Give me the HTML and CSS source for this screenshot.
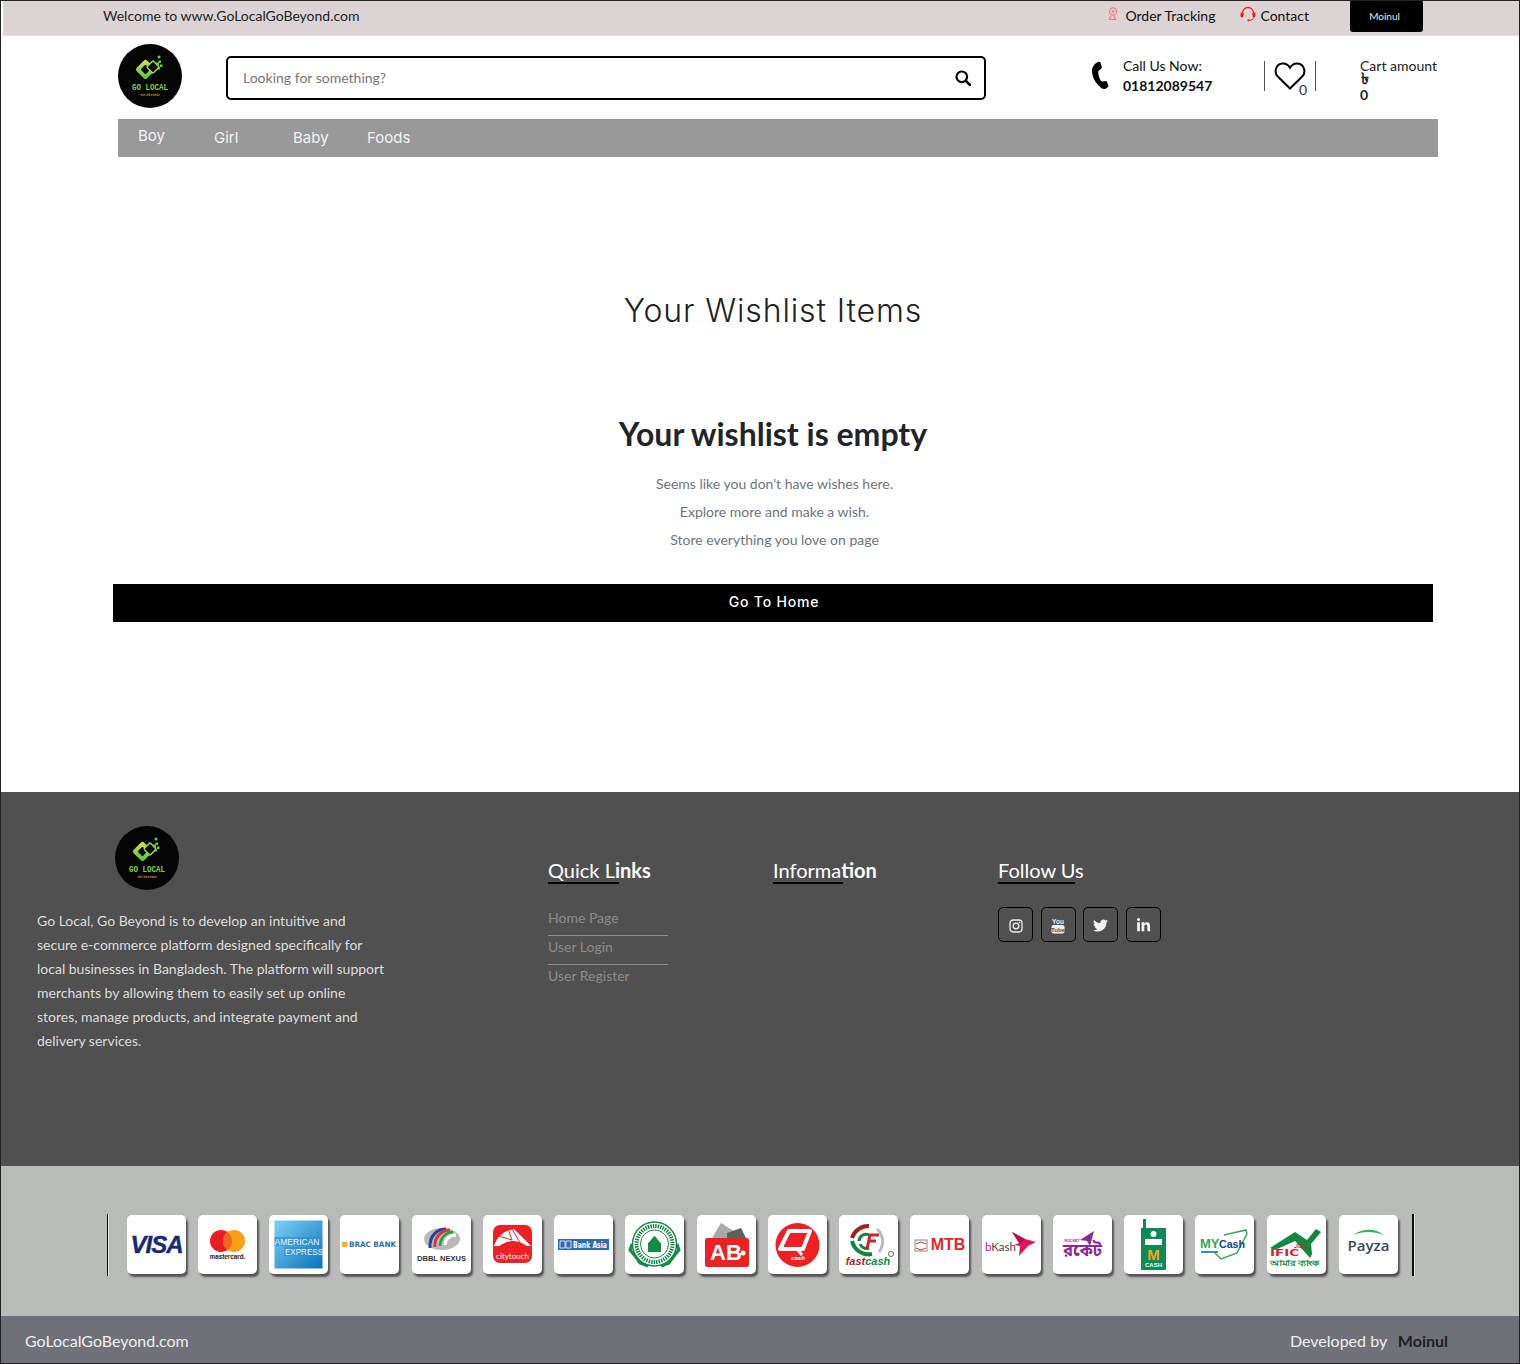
FILE: index.html
```html
<!DOCTYPE html>
<html lang="en">
<head>
<meta charset="utf-8">
<title>Go Local Go Beyond - Wishlist</title>
<link rel="stylesheet" href="styles.css">
</head>
<body>
<svg class="defs" width="0" height="0" aria-hidden="true">
  <defs>
    <linearGradient id="lg" x1="0" y1="0" x2="1" y2="1"><stop offset="0" stop-color="#d8e04a"/><stop offset="1" stop-color="#4fc04a"/></linearGradient>
    <symbol id="logo" viewBox="0 0 64 64">
      <circle cx="32" cy="32" r="32" fill="#050505"/>
      <rect x="20" y="18" width="15" height="15" rx="2.500" transform="rotate(45 27.500 25.500)" fill="url(#lg)"/>
      <rect x="24" y="22" width="7" height="7" rx="1" transform="rotate(45 27.500 25.500)" fill="#050505"/>
      <rect x="30.500" y="18.500" width="9" height="9" rx="1.500" transform="rotate(45 35 23)" fill="#050505" stroke="#a6d846" stroke-width="1.500"/>
      <rect x="38" y="18.500" width="3" height="3" fill="#6ecb47"/><rect x="42" y="20.500" width="2.500" height="2.500" fill="#6ecb47"/><rect x="40.500" y="16.500" width="2.500" height="2.500" fill="#6ecb47"/><rect x="39.500" y="23" width="2.500" height="2.500" fill="#6ecb47"/>
      <circle cx="41" cy="13" r="1.500" fill="#6ecb47"/>
      <text x="32" y="46" class="logo-t1" textLength="36" lengthAdjust="spacingAndGlyphs">GO LOCAL</text>
      <text x="32" y="51.500" class="logo-t2" textLength="19" lengthAdjust="spacingAndGlyphs">GO BEYOND</text>
    </symbol>
  </defs>
</svg>
<div class="page">
  <div class="topbar">
    <span class="welcome">Welcome to www.GoLocalGoBeyond.com</span>
    <div class="top-right">
      <a class="top-link track"><svg class="pin" viewBox="0 0 10 14"><circle cx="5" cy="4.500" r="3.600" fill="none" stroke="#f08080" stroke-width="1.200"/><circle cx="5" cy="4.500" r="1.400" fill="#f08080"/><path d="M3 8.500l-1.500 4h6l-1.500-4" fill="none" stroke="#f08080" stroke-width="1.200"/></svg>Order Tracking</a>
      <a class="top-link contact"><svg class="headset" viewBox="0 0 16 16"><path d="M2.500 9V7a5.500 5.500 0 0 1 11 0v2" fill="none" stroke="#f01818" stroke-width="1.300"/><rect x="0.500" y="6.500" width="3" height="5" rx="1.400" fill="#f01818"/><rect x="12.500" y="6.500" width="3" height="5" rx="1.400" fill="#f01818"/><path d="M13.500 11.500c0 2-2 2.800-4 2.800" fill="none" stroke="#f01818"/><circle cx="8.500" cy="14.300" r="1.100" fill="#f01818"/></svg>Contact</a>
      <button class="user-btn">Moinul</button>
    </div>
  </div>

  <header class="site-header">
    <svg class="logo"><use href="#logo"/></svg>
    <div class="search">
      <span class="search-ph">Looking for something?</span>
      <svg class="search-ic" viewBox="0 0 16 16"><circle cx="6.800" cy="6.800" r="5.300" fill="none" stroke="#000" stroke-width="2.200"/><path d="M10.700 10.700l4.300 4.300" stroke="#000" stroke-width="2.600" stroke-linecap="round"/></svg>
    </div>
    <div class="call">
      <svg class="phone" viewBox="0 0 18 30"><path d="M6 1.500c1-.8 3-.9 3.600 0l1.200 4.800c.2 1-.6 1.700-2.600 3-.9.600-1 1.300-.9 2.700.2 2.500 1 5.200 2.400 7.500.7 1 1.200 1.300 2.200 1 2-.6 3-.9 3.700-.2l1.900 4.300c.2 1.100-1.300 2.600-2.900 3.200-2.200.8-4.500-.2-6.300-2.800C4 21.700 1.300 15.500 1 10.500.8 6.600 3 3.300 6 1.500z" fill="#000"/></svg>
      <div class="call-text"><span>Call Us Now:</span><strong>01812089547</strong></div>
    </div>
    <div class="wish">
      <svg class="heart" viewBox="0 0 32 28"><path d="M16 26.500L3.800 14.500C-.5 10 2 2 8.500 1.600c3.200-.2 5.800 1.300 7.500 4.200 1.700-2.900 4.300-4.400 7.500-4.200C30 2 32.500 10 28.200 14.500z" fill="#fff" stroke="#000" stroke-width="2"/></svg>
      <span class="wish-count">0</span>
    </div>
    <div class="cart">
      <span class="cart-label">Cart amount</span>
      <span class="cart-sym">৳</span>
      <span class="cart-val">0</span>
    </div>
  </header>

  <nav class="main-nav">
    <a class="nav-boy">Boy</a>
    <a class="nav-girl">Girl</a>
    <a class="nav-baby">Baby</a>
    <a>Foods</a>
  </nav>

  <main class="wishlist">
    <h1>Your Wishlist Items</h1>
    <h2>Your wishlist is empty</h2>
    <p>Seems like you don't have wishes here.</p>
    <p>Explore more and make a wish.</p>
    <p>Store everything you love on page</p>
    <a class="home-btn">Go To Home</a>
  </main>

  <footer class="site-footer">
    <div class="about">
      <svg class="logo foot-logo"><use href="#logo"/></svg>
      <p>Go Local, Go Beyond is to develop an intuitive and secure e-commerce platform designed specifically for local businesses in Bangladesh. The platform will support merchants by allowing them to easily set up online stores, manage products, and integrate payment and delivery services.</p>
    </div>
    <div class="foot-col">
      <h3>Quick L<b>inks</b></h3>
      <ul class="foot-links">
        <li>Home Page</li>
        <li>User Login</li>
        <li>User Register</li>
      </ul>
    </div>
    <div class="foot-col">
      <h3 class="h-info">Informa<b>tion</b></h3>
    </div>
    <div class="foot-col">
      <h3 class="h-follow">Follow Us</h3>
      <div class="socials">
        <a class="social"><svg viewBox="0 0 14 14" class="ic-s"><rect x="1" y="1" width="12" height="12" rx="3.200" fill="none" stroke="#eee" stroke-width="1.300"/><circle cx="7" cy="7" r="2.800" fill="none" stroke="#eee" stroke-width="1.300"/><circle cx="10.500" cy="3.500" r=".8" fill="#eee"/></svg></a>
        <a class="social"><svg viewBox="0 0 14 16" class="ic-y"><text x="7" y="6" class="yt-you">You</text><rect x="0.500" y="7" width="13" height="8.500" rx="2" fill="#eee"/><text x="7" y="13.500" class="yt-tube">Tube</text></svg></a>
        <a class="social"><svg viewBox="0 0 512 512" class="ic-t"><path fill="#f4f4f4" d="M459.37 151.716c.325 4.548.325 9.097.325 13.645 0 138.72-105.583 298.558-298.558 298.558-59.452 0-114.68-17.219-161.137-47.106 8.447.974 16.568 1.299 25.34 1.299 49.055 0 94.213-16.568 130.274-44.832-46.132-.975-84.792-31.188-98.112-72.772 6.498.974 12.995 1.624 19.818 1.624 9.421 0 18.843-1.3 27.614-3.573-48.081-9.747-84.143-51.98-84.143-102.985v-1.299c13.969 7.797 30.214 12.67 47.431 13.319-28.264-18.843-46.781-51.005-46.781-87.391 0-19.492 5.197-37.36 14.294-52.954 51.655 63.675 129.3 105.258 216.365 109.807-1.624-7.797-2.599-15.918-2.599-24.04 0-57.828 46.782-104.934 104.934-104.934 30.213 0 57.502 12.67 76.67 33.137 23.715-4.548 46.456-13.32 66.599-25.34-7.798 24.366-24.366 44.833-46.132 57.827 21.117-2.273 41.584-8.122 60.426-16.243-14.292 20.791-32.161 39.308-52.628 54.253z"/></svg></a>
        <a class="social"><svg viewBox="0 0 448 512" class="ic-t"><path fill="#f4f4f4" d="M100.280 448H7.400V148.900h92.880zM53.790 108.100C24.090 108.100 0 83.500 0 53.800a53.790 53.790 0 0 1 107.580 0c0 29.700-24.100 54.300-53.790 54.300zM447.900 448h-92.680V302.400c0-34.700-.7-79.200-48.290-79.200-48.290 0-55.690 37.700-55.690 76.700V448h-92.780V148.900h89.080v40.800h1.300c12.400-23.500 42.690-48.300 87.880-48.300 94 0 111.280 61.900 111.280 142.300V448z"/></svg></a>
      </div>
    </div>
  </footer>

  <section class="payments">
    <div class="pay-row">
      <div class="pay"><svg viewBox="0 0 59 59"><text x="29.500" y="38" class="p-visa">VISA</text></svg></div>
      <div class="pay"><svg viewBox="0 0 59 59"><circle cx="23" cy="26" r="11" fill="#eb1c24"/><circle cx="36" cy="26" r="11" fill="#f9a01b"/><path d="M29.500 17a11 11 0 0 1 0 18 11 11 0 0 1 0-18z" fill="#f26522"/><text x="29.500" y="44" class="p-mc">mastercard.</text></svg></div>
      <div class="pay"><svg viewBox="0 0 59 59"><defs><linearGradient id="amex" x1="0" y1="0" x2="1" y2="1"><stop offset="0" stop-color="#7fd0f4"/><stop offset="1" stop-color="#0b72bb"/></linearGradient></defs><rect x="5.500" y="5.500" width="48" height="48" fill="url(#amex)"/><rect x="5.500" y="22" width="45" height="9" fill="#2b8ccb" opacity=".6"/><rect x="15" y="32" width="38" height="9" fill="#2b8ccb" opacity=".6"/><text x="28" y="30" class="p-amex" textLength="45" lengthAdjust="spacingAndGlyphs">AMERICAN</text><text x="35" y="40" class="p-amex" textLength="38" lengthAdjust="spacingAndGlyphs">EXPRESS</text></svg></div>
      <div class="pay"><svg viewBox="0 0 59 59"><rect x="2" y="27" width="5.500" height="5" fill="#f5b21a"/><text x="32.500" y="32" class="p-brac" textLength="47" lengthAdjust="spacingAndGlyphs">BRAC BANK</text></svg></div>
      <div class="pay"><svg viewBox="0 0 59 59"><ellipse cx="30" cy="24" rx="18" ry="11" fill="#b9b9b9"/><path d="M18 33c-1-13 8-19 16-19" fill="none" stroke="#2b3f9b" stroke-width="3"/><path d="M23 32c-1-10 7-17 15-17" fill="none" stroke="#d13a35" stroke-width="3"/><path d="M28 31c0-8 6-14 13-14" fill="none" stroke="#1f9c4a" stroke-width="2.500"/><path d="M33 30c0-6 5-10 11-10" fill="none" stroke="#fff" stroke-width="3"/><text x="29.500" y="45.500" class="p-dbbl" textLength="49" lengthAdjust="spacingAndGlyphs">DBBL NEXUS</text></svg></div>
      <div class="pay"><svg viewBox="0 0 59 59"><rect x="10" y="10" width="39" height="38" rx="7" fill="#ed2024"/><path d="M11 31c3-10 10-15 20-17l17 17" fill="#fff"/><path d="M11 36c6-7 14-10 19-10s13 3 18 9" fill="#ed2024"/><path d="M12 20l17 5M24 11l5 14M29 14l10 17" stroke="#ed2024" stroke-width="1" fill="none"/><text x="29.500" y="44" class="p-city">citytouch</text></svg></div>
      <div class="pay"><svg viewBox="0 0 59 59"><rect x="4" y="24" width="51" height="11" fill="#2b6bb5"/><path d="M6 26h5v7H6zM12 26h5v7h-5z" fill="none" stroke="#fff" stroke-width=".8"/><text x="19" y="33" class="p-asia" textLength="34" lengthAdjust="spacingAndGlyphs">Bank Asia</text></svg></div>
      <div class="pay"><svg viewBox="0 0 59 59"><circle cx="29.500" cy="29" r="22" fill="none" stroke="#14894a" stroke-width="1.500"/><circle cx="29.500" cy="29" r="18" fill="none" stroke="#14894a" stroke-width="4" stroke-dasharray="1.500 1"/><circle cx="29.500" cy="29" r="14" fill="#fff" stroke="#14894a"/><path d="M23 37v-9c2-1 3-4 6.500-7 3.500 3 4.500 6 6.500 7v9z" fill="#14894a"/><path d="M7 29l-2 6 5 6 5 7 8 3M52 29l2 6-5 6-5 7-8 3" fill="none" stroke="#14894a" stroke-width="3"/></svg></div>
      <div class="pay"><svg viewBox="0 0 59 59"><path d="M15 23l9-15 16 10 3 5z" fill="#a9a9a9"/><path d="M30 18l14-5 5 10H30z" fill="#606060"/><rect x="8" y="23" width="44" height="29" rx="2.500" fill="#ed2024"/><text x="13" y="45" class="p-ab">AB</text><circle cx="46" cy="38" r="2.500" fill="#fff"/></svg></div>
      <div class="pay"><svg viewBox="0 0 59 59"><circle cx="29.500" cy="30" r="22" fill="#ed2024"/><path d="M21 16h21l-7 18H12z" fill="none" stroke="#fff" stroke-width="4" stroke-linejoin="round"/><path d="M29 34l5 6" stroke="#fff" stroke-width="3"/><text x="30" y="45" class="p-q">cash</text></svg></div>
      <div class="pay"><svg viewBox="0 0 59 59"><path d="M30 11a17 17 0 0 0-17 12" fill="none" stroke="#a51f22" stroke-width="4"/><path d="M13 26a17 17 0 0 0 20 13" fill="none" stroke="#15843f" stroke-width="4"/><path d="M38 14a17 17 0 0 1 2 23" fill="none" stroke="#bbb" stroke-width="3"/><path d="M20 26a7 7 0 0 1 10-6M21 29a7 7 0 0 0 9 4" fill="none" stroke="#15843f" stroke-width="3"/><path d="M28 34l3-14h9M29 26h8" fill="none" stroke="#c8262a" stroke-width="3"/><text x="29" y="50" class="p-fast"><tspan fill="#a51f22">fast</tspan><tspan fill="#15843f">cash</tspan></text><circle cx="52" cy="39" r="2.500" fill="none" stroke="#666"/></svg></div>
      <div class="pay"><svg viewBox="0 0 59 59"><rect x="5" y="25" width="12" height="11" fill="#fff" stroke="#888"/><path d="M6 29l5-2 5 2M6 33l5 2 5-2" fill="none" stroke="#d1322e"/><text x="38" y="35" class="p-mtb">MTB</text></svg></div>
      <div class="pay"><svg viewBox="0 0 59 59"><text x="3" y="36" class="p-bkash"><tspan fill="#d1175f">b</tspan>Kash</text><path d="M30 17l13 7 11 3-8 4-9 10 1-10-6-1 5-2z" fill="#e2125f"/><path d="M30 17l13 7-5 5z" fill="#b30f4f"/></svg></div>
      <div class="pay"><svg viewBox="0 0 59 59"><path d="M27 25l14-9-4 15-3-5z" fill="#8c2a92"/><text x="19" y="27" class="p-rocket">ROCKET</text><text x="29.500" y="41" class="p-rocket-bn" textLength="39" lengthAdjust="spacingAndGlyphs">রকেট</text></svg></div>
      <div class="pay"><svg viewBox="0 0 59 59"><rect x="19" y="4" width="3" height="10" fill="#0e8a56"/><rect x="17" y="13" width="25" height="42" fill="#0e8a56"/><circle cx="29.500" cy="19" r="3" fill="#fff"/><rect x="21" y="24" width="17" height="6" fill="#fff"/><text x="29.500" y="45" class="p-m">M</text><text x="29.500" y="52" class="p-mcash">CASH</text></svg></div>
      <div class="pay"><svg viewBox="0 0 59 59"><path d="M29 20l22-5 1 4-10 19-16 6-6-6" fill="#fff" stroke="#3aa655" stroke-width="1.500"/><text x="5" y="33" class="p-my">MY</text><text x="24" y="33" class="p-cash" textLength="26" lengthAdjust="spacingAndGlyphs">Cash</text><rect x="6" y="36" width="17" height="2" fill="#2b9a9a"/></svg></div>
      <div class="pay"><svg viewBox="0 0 59 59"><path d="M3 33L28 17l12 8 9-11 5 3-10 12 1 10-2 4-15-17-20 9z" fill="#13873f"/><path d="M27 33a8 8 0 0 1 9 1M29 30a12 12 0 0 1 11 2" fill="none" stroke="#d1232a"/><text x="3" y="41" class="p-ific" textLength="29" lengthAdjust="spacingAndGlyphs">IFIC</text><text x="28" y="51" class="p-ific2" textLength="50" lengthAdjust="spacingAndGlyphs">আমার ব্যাংক</text></svg></div>
      <div class="pay"><svg viewBox="0 0 59 59"><path d="M14 20c10-7 22-7 31 0-10-4-21-4-31 0z" fill="#2fb457"/><text x="29.500" y="36" class="p-payza">Payza</text></svg></div>
    </div>
  </section>

  <div class="copyright">
    <span>GoLocalGoBeyond.com</span>
    <span class="dev">Developed by <b>Moinul</b></span>
  </div>
</div>
</body>
</html>
```

FILE: styles.css
```css
* { box-sizing: border-box; }
html, body { margin: 0; padding: 0; }
body { font-family: "Lato", "Noto Sans", sans-serif; color: #212529; background: #fff; }
.defs { position: absolute; }
a { text-decoration: none; color: inherit; }

.page { width: 1520px; height: 1364px; border: 1px solid #222; display: flex; flex-direction: column; overflow: hidden; background: #fff; }

.topbar { margin-left: 2px; height: 35px; padding: 0 96px 0 100px; background: #dcd4d4; border-bottom: 1px solid #e2dede; display: flex; align-items: flex-start; justify-content: space-between; font-size: 14px; flex: none; }
.welcome { line-height: 30px; }
.top-right { display: flex; align-items: flex-start; }
.top-link { display: flex; align-items: center; height: 29px; color: #111; white-space: nowrap; }
.track { margin-right: 25px; }
.contact { margin-right: 41px; }
.pin { width: 10px; height: 14px; margin-right: 7px; margin-top: -3px; }
.headset { width: 16px; height: 16px; margin-right: 4px; margin-top: -3px; }
.user-btn { width: 73px; height: 32px; margin-top: -1px; background: #000; color: #e8e8e8; border: 0; border-radius: 3px; font: 10px "Lato", sans-serif; padding: 0 4px 0 0; }

.site-header { height: 83px; padding: 8px 0 0 117px; display: flex; align-items: flex-start; flex: none; }
.logo { width: 64px; height: 64px; display: block; flex: none; }
.logo-t1 { font: 700 9px "Liberation Mono", monospace; fill: #86d23c; text-anchor: middle; }
.logo-t2 { font: 700 3px "DejaVu Sans", sans-serif; fill: #b8821e; text-anchor: middle; }
.search { width: 760px; height: 44px; margin: 12px 0 0 44px; border: 2px solid #000; border-radius: 5px; display: flex; align-items: center; justify-content: space-between; padding: 0 13px 0 15px; flex: none; }
.search-ph { font-size: 14px; color: #777; margin-top: -1px; }
.search-ic { width: 16px; height: 16px; }
.call { display: flex; margin: 12px 0 0 105px; width: 173px; flex: none; }
.phone { width: 18px; height: 30px; margin: 5px 14px 0 0; flex: none; }
.call-text { display: flex; flex-direction: column; font-size: 14px; line-height: 20px; color: #111; }
.call-text strong { font-size: 14px; font-weight: 700; }
.wish { position: relative; width: 52px; height: 30px; margin-top: 17px; border-left: 1px solid #555; border-right: 1px solid #555; flex: none; }
.heart { position: absolute; left: 9px; top: 1px; width: 32px; height: 28px; }
.wish-count { position: absolute; left: 34px; top: 21px; font-size: 14px; line-height: 16px; color: #333; }
.cart { display: flex; flex-direction: column; margin: 13px 0 0 44px; font-size: 14px; color: #222; }
.cart-label { line-height: 17px; white-space: nowrap; }
.cart-sym { font-size: 16px; font-weight: 700; line-height: 8px; height: 10px; margin-left: 1px; }
.cart-val { font-size: 14px; font-weight: 700; line-height: 22px; }

.main-nav { width: 1320px; height: 38px; margin-left: 117px; background: #999; display: flex; padding-left: 20px; font: 15px/38px "Inter", sans-serif; color: #f2f2f2; flex: none; }
.main-nav a { display: block; }
.nav-boy { width: 76px; margin-top: -2px; }
.nav-girl { width: 79px; }
.nav-baby { width: 74px; }

.wishlist { height: 635px; padding: 130px 0 0 26px; text-align: center; display: flex; flex-direction: column; align-items: center; flex: none; }
.wishlist h1 { margin: 0; font: 300 32px/48px "Inter", sans-serif; letter-spacing: .85px; color: #222; }
.wishlist h2 { margin: 75px 0 12px; font: 700 32px/48px "Lato", sans-serif; color: #212529; }
.wishlist p { margin: 0 0 0 3px; font-size: 14px; line-height: 28px; color: #6c757d; }
.home-btn { width: 1320px; height: 38px; margin: 30px 0 0; background: #000; color: #fff; font: 500 14px/36px "Inter", sans-serif; letter-spacing: .8px; text-indent: 2px; }

.site-footer { height: 374px; background: #505050; position: relative; display: flex; padding-left: 36px; flex: none; }
.about { width: 511px; padding-top: 34px; }
.foot-logo { margin-left: 78px; }
.about p { width: 352px; margin: 19px 0 0; font-size: 14px; line-height: 24px; color: #ddd; }
.foot-col { width: 225px; padding-top: 63px; }
.foot-col h3 { margin: 0; height: 30px; font-size: 20px; font-weight: 400; line-height: 30px; color: #fff; position: relative; }
.foot-col h3 b { font-weight: 700; }
.foot-col h3::after { content: ""; position: absolute; left: 0; top: 27px; width: 71px; height: 2px; background: #000; }
.foot-col .h-info::after { width: 70px; }
.foot-col .h-follow::after { width: 77px; }
.foot-links { list-style: none; margin: 22px 0 0; padding: 0; width: 120px; font-size: 14px; color: #8c8c8c; }
.foot-links li { height: 29px; line-height: 21px; border-bottom: 1px solid #8c8c8c; }
.foot-links li:last-child { border-bottom: 0; }
.socials { display: flex; gap: 7.600px; margin-top: 22px; }
.social { width: 35px; height: 35px; border: 1px solid #000; border-radius: 5px; display: flex; align-items: center; justify-content: center; padding-top: 2px; }
.ic-s { width: 14px; height: 14px; }
.ic-y { width: 14px; height: 16px; }
.ic-t { width: 15px; height: 15px; }
.yt-you { font: 700 6.500px "Liberation Sans Narrow", "Liberation Sans", sans-serif; fill: #eee; text-anchor: middle; }
.yt-tube { font: 700 6px "Liberation Sans Narrow", "Liberation Sans", sans-serif; fill: #505050; text-anchor: middle; }

.payments { height: 150px; background: #b9bbb9; padding: 48px 0 0 106px; flex: none; }
.pay-row { width: 1307px; height: 62px; border-left: 1px solid #111; border-right: 2px solid #111; box-shadow: inset 1px 0 #e4e4e4, 1px 0 #e4e4e4; display: flex; gap: 12.250px; padding: 1px 0 0 18.700px; }
.pay { width: 59px; height: 59px; flex: none; background: #fff; border-radius: 5px; box-shadow: 2px 3px 2px #555; }
.pay:last-child { margin-left: 1px; }
.pay svg { width: 59px; height: 59px; display: block; }
.p-visa { font: italic 700 24px "Liberation Sans", sans-serif; fill: #1a2a75; stroke: #1a2a75; stroke-width: .4px; text-anchor: middle; letter-spacing: -1px; }
.p-mc { font: 700 6.300px "Liberation Sans", sans-serif; fill: #222; text-anchor: middle; }
.p-amex { font: 400 8.500px "Liberation Sans", sans-serif; fill: #e8f6fd; text-anchor: middle; }
.p-brac { font: 700 7.500px "DejaVu Sans", sans-serif; fill: #1c6fb5; text-anchor: middle; }
.p-dbbl { font: 700 7.500px "Liberation Sans", sans-serif; fill: #333; text-anchor: middle; }
.p-city { font: 400 8px "Lato", sans-serif; fill: #fff; text-anchor: middle; }
.p-asia { font: 700 8px "DejaVu Sans", sans-serif; fill: #fff; }
.p-ab { font: 700 22px "Liberation Sans", sans-serif; fill: #fff; }
.p-q { font: italic 700 6px "Liberation Sans", sans-serif; fill: #fff; text-anchor: middle; }
.p-fast { font: italic 700 11px "Liberation Sans", sans-serif; text-anchor: middle; }
.p-mtb { font: 700 16px "Liberation Sans", sans-serif; fill: #e3262b; text-anchor: middle; }
.p-bkash { font: 400 11.500px "Liberation Sans Narrow", "Lato", sans-serif; fill: #444; }
.p-rocket { font: 700 3.500px "Liberation Sans", sans-serif; fill: #8c2a92; text-anchor: middle; }
.p-rocket-bn { font: 700 17px "Noto Sans Bengali", "Noto Sans", sans-serif; fill: #8c2a92; text-anchor: middle; }
.p-m { font: 700 15px "Liberation Sans", sans-serif; fill: #f6a623; text-anchor: middle; }
.p-mcash { font: 700 6px "Liberation Sans", sans-serif; fill: #fff; text-anchor: middle; }
.p-my { font: 700 13px "Liberation Sans", sans-serif; fill: #3aa655; }
.p-cash { font: 700 11px "Liberation Sans", sans-serif; fill: #124a86; }
.p-ific { font: 700 8px "DejaVu Sans", sans-serif; fill: #d1232a; }
.p-ific2 { font: 700 7.500px "Noto Sans", sans-serif; fill: #13873f; text-anchor: middle; }
.p-payza { font: 600 15px "Open Sans", sans-serif; fill: #3b4757; text-anchor: middle; }

.copyright { flex: 1; background: #707178; display: flex; justify-content: space-between; padding: 0 71px 0 24px; font-size: 16px; line-height: 50px; color: #eee; }
.dev b { margin-left: 7px; color: #222; font-weight: 700; }
```
